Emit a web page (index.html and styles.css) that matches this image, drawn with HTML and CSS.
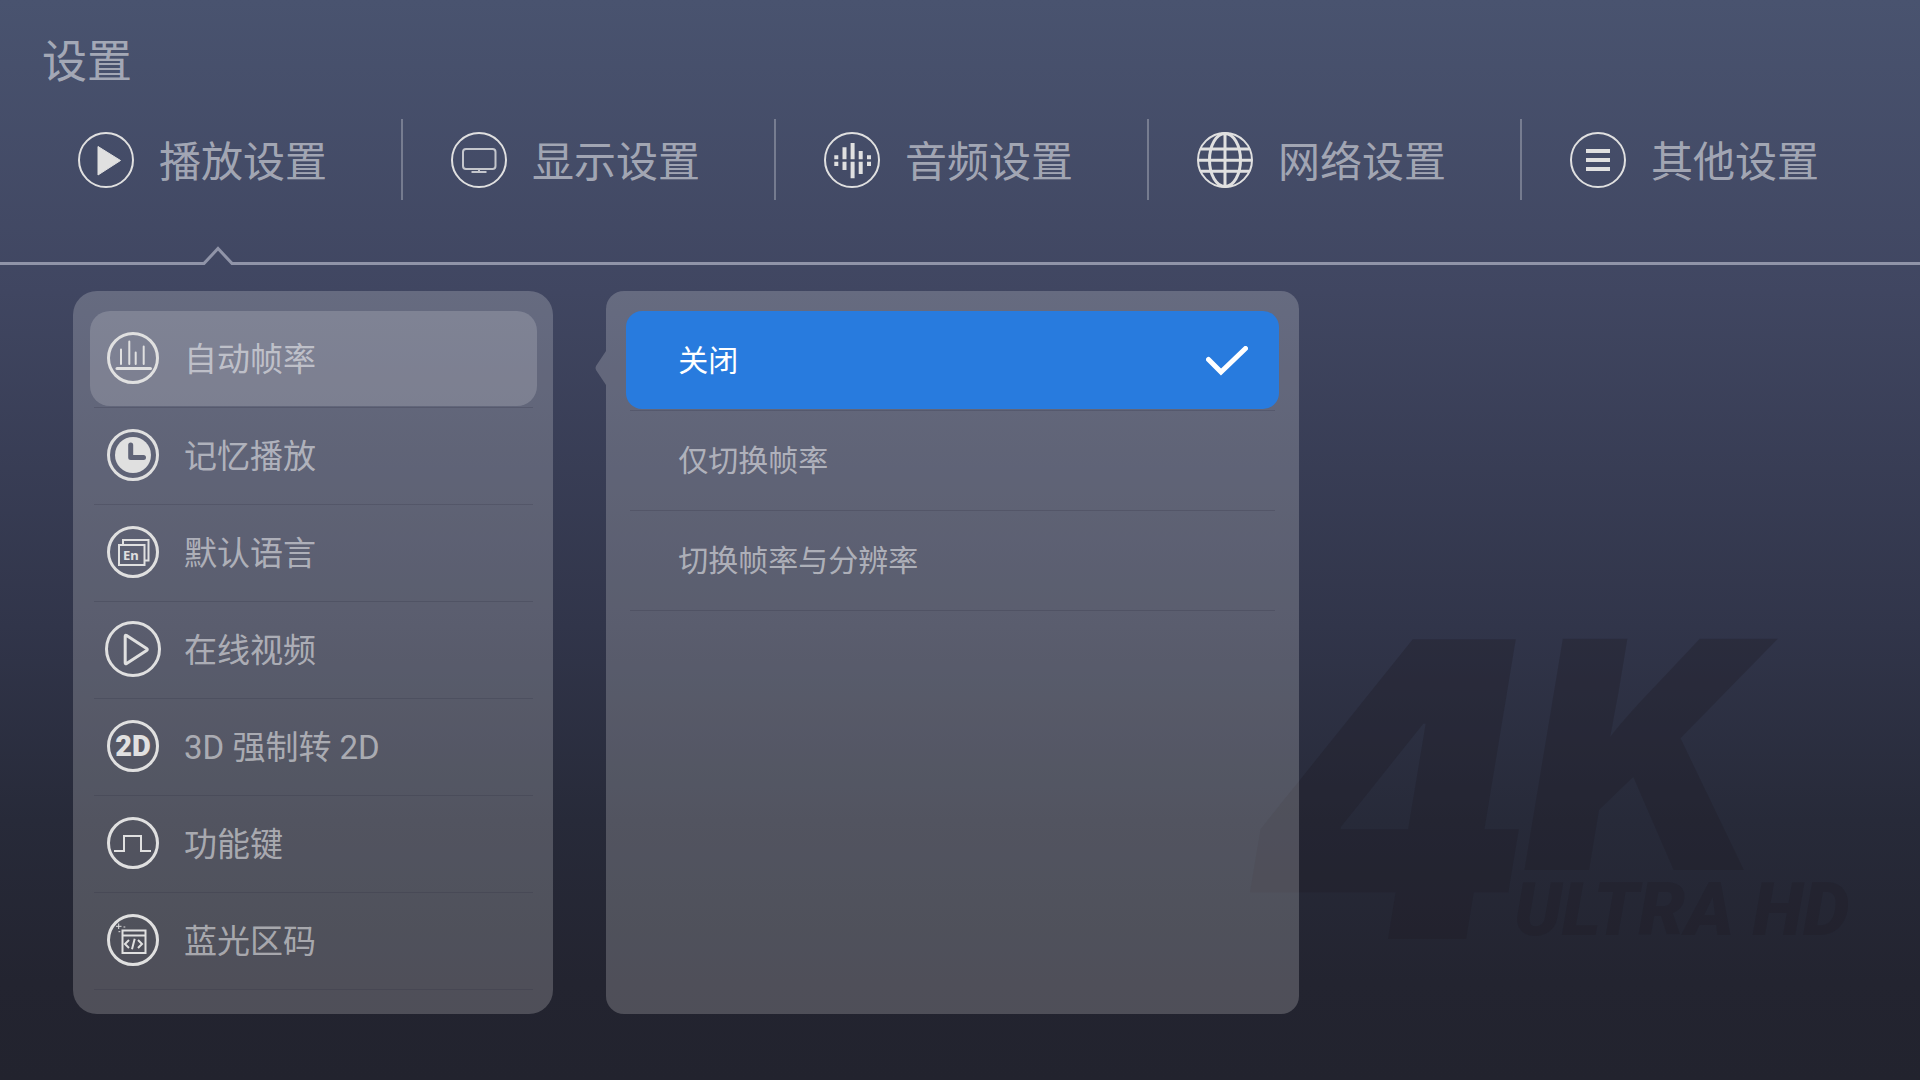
FILE: index.html
```html
<!DOCTYPE html>
<html lang="zh-CN">
<head>
    <meta charset="UTF-8">
    <meta name="viewport" content="width=device-width, initial-scale=1.0">
    <title>设置</title>
    <link rel="stylesheet" href="styles.css">
</head>
<body>
    <svg class="watermark" viewBox="0 0 640 320" aria-hidden="true">
        <text class="mark-4" x="24" y="309">4</text>
        <text class="mark-k" x="304" y="240">K</text>
        <text class="mark-hd" x="294" y="305">ULTRA HD</text>
    </svg>

    <header class="header">
        <h1>设置</h1>
        <nav class="tabs">
            <a class="tab" href="#play" aria-current="page">
                <svg class="icon" width="56" height="56" viewBox="0 0 56 56">
                    <circle cx="28" cy="28" r="27"/>
                    <path class="solid" d="M20 14.500v28.500L42.500 28.500z"/>
                </svg>
                <span class="label">播放设置</span>
            </a>
            <a class="tab" href="#display">
                <svg class="icon" width="56" height="56" viewBox="0 0 56 56">
                    <circle cx="28" cy="28" r="27"/>
                    <g class="screen">
                        <rect x="12" y="17" width="32.500" height="20" rx="3"/>
                        <path d="M28 37v3M20.500 40h15"/>
                    </g>
                </svg>
                <span class="label">显示设置</span>
            </a>
            <a class="tab" href="#audio">
                <svg class="icon" width="56" height="56" viewBox="0 0 56 56">
                    <circle cx="28" cy="28" r="27"/>
                    <path class="bars" d="M12.300 23.300v4M12.300 29.700v4.300M20.500 15.300v12M20.500 29.700v8.300M28.600 11v16.300M28.600 29.700v16.500M36.700 19v8.300M36.700 29.700v12.300M45 23.300v4M45 29.700v4.300"/>
                </svg>
                <span class="label">音频设置</span>
            </a>
            <a class="tab" href="#network">
                <svg class="icon" width="56" height="56" viewBox="0 0 56 56">
                    <circle cx="28" cy="28" r="27"/>
                    <g class="globe">
                        <ellipse cx="28" cy="28" rx="15.500" ry="26.500"/>
                        <path d="M28 1v54M1 28.300h54M3.500 17h49M3.500 39.300h49"/>
                    </g>
                </svg>
                <span class="label">网络设置</span>
            </a>
            <a class="tab" href="#other">
                <svg class="icon" width="56" height="56" viewBox="0 0 56 56">
                    <circle cx="28" cy="28" r="27"/>
                    <path class="lines" d="M16 19h24M16 28h24M16 37h24"/>
                </svg>
                <span class="label">其他设置</span>
            </a>
        </nav>
        <div class="divider">
            <span class="divider-start"></span>
            <svg width="30" height="19" viewBox="0 0 30 19">
                <path d="M0 17.500h1L15 2.500l14 15h1"/>
            </svg>
            <span class="divider-end"></span>
        </div>
    </header>

    <main class="content">
        <ul class="panel menu">
            <li>
                <button class="menu-item active" type="button">
                    <svg class="icon" width="52" height="52" viewBox="0 0 52 52">
                        <circle cx="26" cy="26" r="24.500"/>
                        <path class="round" d="M14 17.500V32M22.300 9.500V32M28.700 20.500V32M36.700 14.500V32"/>
                        <path class="round base" d="M10 36.500h33.500"/>
                    </svg>
                    <span class="label">自动帧率</span>
                </button>
            </li>
            <li>
                <button class="menu-item" type="button">
                    <svg class="icon" width="52" height="52" viewBox="0 0 52 52">
                        <mask id="hands">
                            <rect width="52" height="52" fill="#fff"/>
                            <path d="M23.700 16v12.500H36.500" fill="none" stroke="#000" stroke-width="5" stroke-linecap="round" stroke-linejoin="round"/>
                        </mask>
                        <circle cx="26" cy="26" r="24.500"/>
                        <circle class="face" cx="26" cy="26" r="18" mask="url(#hands)"/>
                    </svg>
                    <span class="label">记忆播放</span>
                </button>
            </li>
            <li>
                <button class="menu-item" type="button">
                    <svg class="icon" width="52" height="52" viewBox="0 0 52 52">
                        <circle cx="26" cy="26" r="24.500"/>
                        <g class="thin">
                            <path d="M16 18.500V14h25.500v20.500H38"/>
                            <rect x="12" y="19" width="25.500" height="20"/>
                        </g>
                        <text class="lang" x="16" y="34">En</text>
                    </svg>
                    <span class="label">默认语言</span>
                </button>
            </li>
            <li>
                <button class="menu-item" type="button">
                    <svg class="icon icon-wide" width="56" height="56" viewBox="0 0 56 56">
                        <circle cx="28" cy="28" r="26.500"/>
                        <path d="M20.200 15.200v26.600q0 1.600 1.400.7l20-13q1.400-1 0-2l-20-13q-1.400-.9-1.400.7z"/>
                    </svg>
                    <span class="label">在线视频</span>
                </button>
            </li>
            <li>
                <button class="menu-item" type="button">
                    <svg class="icon" width="52" height="52" viewBox="0 0 52 52">
                        <circle cx="26" cy="26" r="24.500"/>
                        <text class="flat" x="26" y="36">2D</text>
                    </svg>
                    <span class="label">3D 强制转 2D</span>
                </button>
            </li>
            <li>
                <button class="menu-item" type="button">
                    <svg class="icon" width="52" height="52" viewBox="0 0 52 52">
                        <circle cx="26" cy="26" r="24.500"/>
                        <path class="thin" d="M7 34h10V19h17v15h10"/>
                    </svg>
                    <span class="label">功能键</span>
                </button>
            </li>
            <li>
                <button class="menu-item" type="button">
                    <svg class="icon" width="52" height="52" viewBox="0 0 52 52">
                        <circle cx="26" cy="26" r="24.500"/>
                        <g class="thin">
                            <rect x="15.500" y="16.500" width="23" height="22.500"/>
                            <path d="M15.500 21.500h23M22 26l-4 4 4 4M27.700 24.700l-2.700 10.600M31 26l4 4-4 4"/>
                        </g>
                        <path class="spark" d="M11.700 9.500v5.500M9 12.300h5.500M16.500 13h1.800M11.500 17.700h1.800"/>
                    </svg>
                    <span class="label">蓝光区码</span>
                </button>
            </li>
        </ul>

        <section class="panel options">
            <svg class="pointer" width="11" height="34" viewBox="0 0 11 34" aria-hidden="true">
                <path d="M11 0L1 15q-1 2 0 4L11 34z"/>
            </svg>
            <ul>
                <li>
                    <button class="option selected" type="button" aria-pressed="true">
                        <span class="label">关闭</span>
                        <svg class="check" width="42" height="30" viewBox="0 0 42 30">
                            <path d="M2.500 13.500L15 26 39.500 2.500"/>
                        </svg>
                    </button>
                </li>
                <li>
                    <button class="option" type="button">
                        <span class="label">仅切换帧率</span>
                    </button>
                </li>
                <li>
                    <button class="option" type="button">
                        <span class="label">切换帧率与分辨率</span>
                    </button>
                </li>
            </ul>
        </section>
    </main>
</body>
</html>
```
FILE: styles.css
```css
* {
    box-sizing: border-box;
}
body {
    margin: 0;
    min-height: 100vh;
    display: flex;
    flex-direction: column;
    position: relative;
    font-family: Roboto, "Noto Sans CJK SC", sans-serif;
    color: rgba(255, 255, 255, 0.52);
    background: linear-gradient(#49536f 0%, #404661 27%, #31354a 58%, #272a39 76%, #232430 91%, #22232e 100%);
}
ul {
    list-style: none;
    margin: 0;
    padding: 0;
}
button {
    font: inherit;
    color: inherit;
    background: none;
    border: 0;
    text-align: left;
    cursor: pointer;
}
.label {
    padding-bottom: 2px;
}

/* Header */
.header h1 {
    margin: 0;
    padding: 30px 42px 23px;
    font-size: 45px;
    line-height: 66px;
    font-weight: 400;
}
.tabs {
    display: grid;
    grid-template-columns: repeat(5, 1fr);
    padding: 0 25px 0 30px;
}
.tab {
    display: flex;
    align-items: center;
    gap: 25px;
    height: 81px;
    padding-left: 48px;
    border-right: 2px solid rgba(255, 255, 255, 0.27);
    font-size: 42px;
    color: inherit;
    text-decoration: none;
    white-space: nowrap;
}
.tab:last-child {
    border-right: 0;
}
.divider {
    display: flex;
    align-items: flex-end;
    margin-top: 46px;
}
.divider span {
    height: 3px;
    background: #9094a8;
}
.divider-start {
    width: 203px;
}
.divider-end {
    flex: 1;
}
.divider path {
    fill: none;
    stroke: #9094a8;
    stroke-width: 3;
}

/* Icons */
.icon {
    flex: none;
    fill: none;
    stroke: #e0e0e0;
    stroke-width: 2;
}
.menu-item .icon {
    stroke-width: 3;
}
.icon .solid {
    fill: #e0e0e0;
    stroke-linejoin: round;
    stroke-width: 1;
}
.icon .thin {
    stroke-width: 2;
}
.icon .screen {
    stroke: #c4c6cc;
}
.icon .bars {
    stroke-width: 4;
}
.icon .globe {
    stroke-width: 3;
}
.icon .lines {
    stroke-width: 4;
}
.icon .round {
    stroke-width: 2;
    stroke-linecap: round;
}
.icon .base {
    stroke-width: 3;
}
.icon .spark {
    stroke-width: 1;
}
.icon .face,
.icon text {
    fill: #e0e0e0;
    stroke: none;
}
.icon .lang {
    font: 700 13px "Noto Sans", sans-serif;
}
.icon .flat {
    font: 900 29px Roboto, sans-serif;
    text-anchor: middle;
}

/* Panels */
.content {
    flex: 1;
    display: grid;
    grid-template-columns: 26% 37.5%;
    gap: 53px;
    padding: 26px 0 66px 73px;
}
.panel {
    position: relative;
    background: rgba(255, 255, 255, 0.2);
}
.panel li::after {
    content: "";
    display: block;
    height: 1px;
    margin: 1px 4px 0;
    background: rgba(40, 42, 60, 0.2);
}
.menu {
    padding: 20px 16px 24px 17px;
    border-radius: 24px;
}
.menu-item {
    display: flex;
    align-items: center;
    gap: 25px;
    width: 100%;
    height: 95px;
    padding: 0 17px 2px;
    border-radius: 20px;
    font-size: 33px;
}
.menu-item.active {
    background: rgba(255, 255, 255, 0.17);
}
.icon-wide {
    margin: 0 -2px;
}
.options {
    padding: 20px;
    border-radius: 18px;
}
.option {
    display: flex;
    align-items: center;
    justify-content: space-between;
    width: 100%;
    height: 98px;
    padding: 0 31px 2px 52px;
    border-radius: 16px;
    font-size: 30px;
}
.option.selected {
    background: #287bde;
    color: #fff;
}
.check {
    margin-top: 4px;
    fill: none;
    stroke: #fff;
    stroke-width: 5;
    stroke-linecap: round;
}
.pointer {
    position: absolute;
    right: 100%;
    top: 60px;
    fill: rgba(255, 255, 255, 0.2);
}

/* Background logo */
.watermark {
    position: absolute;
    right: 60px;
    bottom: 130px;
    width: 640px;
    overflow: visible;
    fill: rgba(30, 28, 36, 0.32);
}
.mark-4 {
    font: italic 900 412px Inter, sans-serif;
}
.mark-k {
    font: italic 900 318px Inter, sans-serif;
}
.mark-hd {
    font: italic 900 74px Roboto, sans-serif;
}
```
